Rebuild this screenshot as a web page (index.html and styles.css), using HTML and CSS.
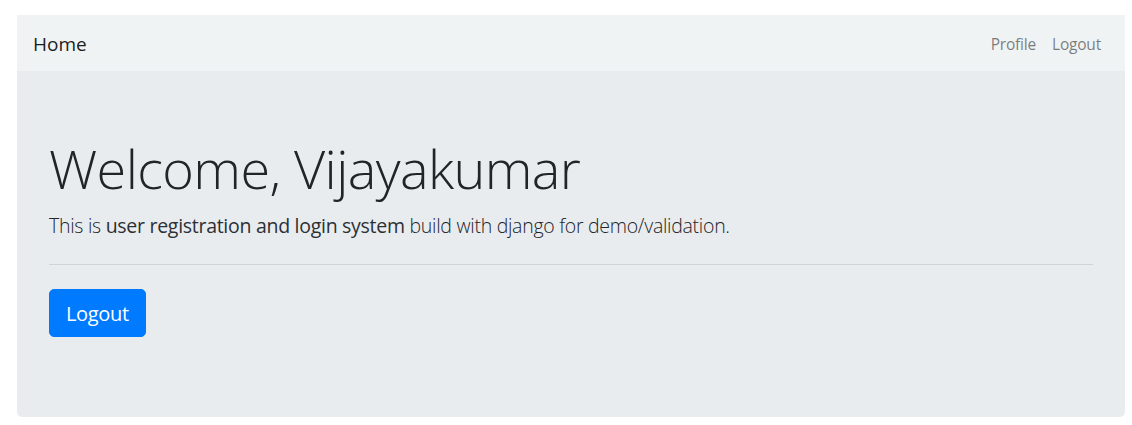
FILE: index.html
```html
<!DOCTYPE html>
<html lang="en">
<head>
<meta charset="utf-8">
<title>Home</title>
<link rel="stylesheet" href="styles.css">
</head>
<body>
<div class="container">
  <nav class="navbar">
    <a class="brand" href="#">Home</a>
    <ul class="nav">
      <li><a class="nav-link" href="#">Profile</a></li>
      <li><a class="nav-link" href="#">Logout</a></li>
    </ul>
  </nav>
  <div class="jumbotron">
    <h1 class="display">Welcome, Vijayakumar</h1>
    <p class="lead intro">This is <strong>user registration and login system</strong> build with django for demo/validation.</p>
    <hr class="divider">
    <p class="lead"><a class="btn" href="#">Logout</a></p>
  </div>
</div>
</body>
</html>
```
FILE: styles.css
```css
* { box-sizing: border-box; }
html, body { margin: 0; padding: 0; background: #fff; }
body {
  font-family: "Open Sans", "Noto Sans", sans-serif;
  font-size: 16px;
  line-height: 1.5;
  color: #212529;
}
.container {
  margin: 15px 0 0 17px;
  width: 1108px;
}
.navbar {
  display: flex;
  align-items: center;
  justify-content: space-between;
  height: 56px;
  padding: 9px 16px 7px;
  background: #eff3f4;
}
.brand {
  font-size: 19px;
  line-height: 30px;
  color: rgba(0,0,0,.9);
  text-decoration: none;
}
.nav {
  display: flex;
  list-style: none;
  margin: 0;
  padding: 0;
}
.nav-link {
  display: block;
  padding: 8px;
  color: rgba(0,0,0,.5);
  text-decoration: none;
  font-size: 15.5px;
  letter-spacing: -0.2px;
  line-height: 24px;
}
.jumbotron {
  background: #e9ecef;
  padding: 64px 32px;
  border-radius: 0 0 5px 5px;
}
.display {
  margin: 0 0 8px;
  font-size: 54px;
  letter-spacing: -0.6px;
  font-weight: 300;
  line-height: 67px;
}
.lead {
  margin: 0 0 16px;
  font-size: 19.5px;
  letter-spacing: -0.28px;
  font-weight: 300;
  line-height: 30px;
}
.intro {
  padding-top: 1px;
  line-height: 29px;
}
.lead strong { font-weight: 400; color: #2b3035; }
.divider {
  margin: 24px 0;
  border: 0;
  border-top: 1px solid rgba(0,0,0,.1);
}
.btn {
  display: inline-block;
  padding: 9px 16px 7px;
  font-size: 20px;
  letter-spacing: -0.35px;
  line-height: 30px;
  font-weight: 400;
  color: #fff;
  background: #007bff;
  border: 1px solid #007bff;
  border-radius: 5px;
  text-decoration: none;
}
```
